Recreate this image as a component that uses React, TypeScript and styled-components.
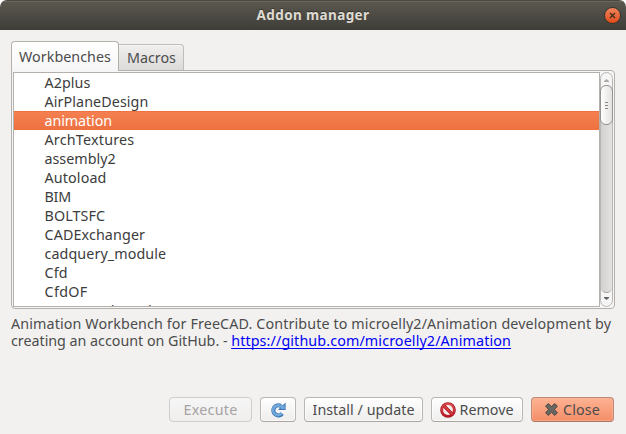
import React from 'react';
import styled, { createGlobalStyle } from 'styled-components';

const GlobalStyle = createGlobalStyle`
  * { box-sizing: border-box; }
  body { margin: 0; background: #fff; }
`;

const Window = styled.div`
  width: 626px;
  height: 434px;
  display: flex;
  flex-direction: column;
  overflow: hidden;
  border-radius: 7px 7px 0 0;
  background: #f2f1f0;
  color: #4c4c4c;
  font-family: 'Noto Sans', 'Open Sans', sans-serif;
  font-size: 14.3px;
  white-space: nowrap;
`;

const TitleBar = styled.header`
  flex: none;
  height: 30px;
  display: grid;
  grid-template-columns: 30px 1fr 30px;
  align-items: center;
  background: linear-gradient(#5b584f, #3e3d38);
  border-top: 1px solid #4b4943;
  box-shadow: inset 0 1px #69665d;
`;

const Title = styled.h1`
  grid-column: 2;
  margin: 0;
  text-align: center;
  font-size: 13.5px;
  line-height: 29px;
  font-weight: 700;
  letter-spacing: 0.38px;
  color: #dfdbd2;
  text-shadow: 0 -1px #33322e;
`;

const WindowClose = styled.button`
  width: 17px;
  height: 17px;
  margin: 0 0 0 7.5px;
  padding: 0;
  display: flex;
  border: 1px solid #35342f;
  border-radius: 50%;
  background: linear-gradient(#f4845d, #df4b1b);
`;

const Content = styled.main`
  display: flex;
  flex-direction: column;
  padding: 11px 11px 0;
`;

const TabBar = styled.div`
  display: flex;
  align-items: flex-end;
  height: 30px;
  z-index: 1;
  margin-bottom: -1px;
`;

const Tab = styled.button<{ $active?: boolean }>`
  width: ${p => (p.$active ? 108 : 65)}px;
  height: ${p => (p.$active ? 30 : 26)}px;
  margin: ${p => (p.$active ? '0' : '0 0 1px')};
  padding: ${p => (p.$active ? '0 0 0 7px' : '0 0 0 8px')};
  text-align: left;
  border: 1px solid ${p => (p.$active ? '#b4b1ac' : '#c0bdb9')};
  border-bottom: 0;
  border-left-width: ${p => (p.$active ? 1 : 0)}px;
  border-radius: ${p => (p.$active ? '4px 4px 0 0' : '0 4px 0 0')};
  background: ${p => (p.$active ? 'linear-gradient(#fff, #f7f6f6)' : 'linear-gradient(#f0efee, #dddbd9)')};
  box-shadow: ${p => (p.$active ? 'none' : 'inset 0 1px #f8f7f7')};
  color: inherit;
  font: inherit;
  line-height: ${p => (p.$active ? 29 : 25)}px;
  letter-spacing: ${p => (p.$active ? 0.045 : 0)}px;
`;

const Pane = styled.section`
  width: 604px;
  height: 239px;
  padding: 1px;
  border: 1px solid #b4b1ac;
  border-radius: 0 4px 4px 4px;
  background: #f7f6f6;
`;

const ListFrame = styled.div`
  display: flex;
  height: 235px;
`;

const List = styled.ul`
  width: 587px;
  height: 235px;
  margin: 0;
  padding: 0;
  list-style: none;
  overflow: hidden;
  border: 1px solid #b4b1ac;
  background: #fff;
  color: #3c3c3c;
`;

const Item = styled.li<{ $selected?: boolean; $spacing: number }>`
  height: 19px;
  line-height: 19px;
  padding-left: 30.5px;
  letter-spacing: ${p => p.$spacing}px;
  color: ${p => (p.$selected ? '#fff' : 'inherit')};
  background: ${p => (p.$selected ? 'linear-gradient(#f58051, #ee7140)' : 'none')};
  box-shadow: ${p => (p.$selected ? 'inset 0 1px #ef7240' : 'none')};
`;

const ScrollBar = styled.div`
  width: 13px;
  height: 235px;
  display: flex;
  flex-direction: column;
  border: 1px solid #b9b6b2;
  border-radius: 7px;
  background: #f6f5f5;
`;

const Stepper = styled.div<{ $down?: boolean }>`
  flex: none;
  height: ${p => (p.$down ? 13 : 12)}px;
  display: flex;
  justify-content: center;
  padding-top: ${p => (p.$down ? 4 : 6)}px;
  color: ${p => (p.$down ? '#656565' : '#aaa')};
`;

const Track = styled.div`
  flex: 1;
  border-bottom: 1px solid #aaa7a3;
  border-radius: 6px;
  background: linear-gradient(90deg, #d3d1cf, #e3e2e0);
`;

const Thumb = styled.div`
  width: 13px;
  height: 40px;
  margin-left: -1px;
  display: flex;
  flex-direction: column;
  align-items: center;
  justify-content: center;
  gap: 2px;
  border: 1px solid #96938f;
  border-radius: 6px;
  background: linear-gradient(90deg, #fff, #e3e2e0);
`;

const Grip = styled.span`
  width: 3px;
  height: 1px;
  background: #8c8985;
`;

const Description = styled.p`
  height: 88px;
  margin: 0;
  padding-top: 6px;
  line-height: 17px;
`;

const Line = styled.span<{ $spacing?: number }>`
  letter-spacing: ${p => p.$spacing ?? 0.12}px;
`;

const Link = styled.a`
  color: #0000f5;
  letter-spacing: 0.12px;
  text-decoration: underline;
  text-decoration-thickness: 1px;
  text-underline-offset: 2px;
  text-decoration-skip-ink: none;
`;

const Actions = styled.footer`
  display: flex;
  justify-content: flex-end;
  gap: 8px;
  padding-right: 1px;
`;

const Button = styled.button<{ $width: number; $primary?: boolean; $spacing?: number; $gap?: number }>`
  width: ${p => p.$width}px;
  height: 25px;
  padding: 0;
  display: flex;
  align-items: center;
  justify-content: center;
  gap: ${p => p.$gap ?? 0}px;
  border: 1px solid ${p => (p.$primary ? '#bd8a77' : '#b9b6b2')};
  border-bottom-color: ${p => (p.$primary ? '#a87866' : '#a9a6a2')};
  border-radius: 4px;
  background: ${p => (p.$primary ? 'linear-gradient(#fdb293, #f48e68)' : 'linear-gradient(#fff, #eeedec)')};
  box-shadow: inset 0 0 0 1px ${p => (p.$primary ? '#ffb69a80' : '#ffffffb0')};
  color: #4c4c4c;
  font: inherit;
  line-height: 23px;
  letter-spacing: ${p => p.$spacing ?? 0}px;

  &:disabled {
    color: #a5a4a2;
    border-color: #d0cecc;
    background: linear-gradient(#f7f6f6, #efeeed);
    box-shadow: none;
  }
`;

const addons: { name: string; spacing: number }[] = [
  { name: 'A2plus', spacing: 0.08 },
  { name: 'AirPlaneDesign', spacing: 0.09 },
  { name: 'animation', spacing: -0.08 },
  { name: 'ArchTextures', spacing: 0.22 },
  { name: 'assembly2', spacing: 0 },
  { name: 'Autoload', spacing: 0.14 },
  { name: 'BIM', spacing: -0.2 },
  { name: 'BOLTSFC', spacing: 0.1 },
  { name: 'CADExchanger', spacing: 0.12 },
  { name: 'cadquery_module', spacing: 0.09 },
  { name: 'Cfd', spacing: 0.2 },
  { name: 'CfdOF', spacing: 0.34 },
  { name: 'CommandPanel', spacing: -0.02 },
];

const Arrow = ({ down }: { down?: boolean }) => (
  <svg width="5" height="3" viewBox="0 0 5 3" fill="currentColor">
    <path d={down ? 'M0 0h5v1L2.5 3 0 1z' : 'M0 3V2l2.5-2L5 2v1z'} />
  </svg>
);

const RefreshIcon = () => (
  <svg width="16" height="16" viewBox="0 0 16 16" fill="none">
    <path d="M12.2 11.6A5 5 0 1 1 10.8 4" stroke="#3f77b4" strokeWidth="4.2" />
    <path d="M15.6 0.6V8H8L10.2 5.6 9 3.4 13 3z" fill="#3f77b4" />
    <path d="M11.7 11.1A4.8 4.8 0 1 1 10.6 4.2L12.8 5" stroke="#72a9dc" strokeWidth="2.6" />
    <path d="M14.7 2.6V7.1H10.3z" fill="#72a9dc" />
  </svg>
);

const RemoveIcon = () => (
  <svg width="16" height="16" viewBox="0 0 16 16" fill="none">
    <defs>
      <linearGradient id="removeRed" x1="0" y1="0" x2="0" y2="1">
        <stop offset="0" stopColor="#e0504d" />
        <stop offset="1" stopColor="#ba1626" />
      </linearGradient>
    </defs>
    <circle cx="8" cy="8" r="7.8" fill="#a51725" />
    <circle cx="8" cy="8" r="7.1" fill="url(#removeRed)" />
    <circle cx="8" cy="8" r="4.9" fill="#f5eeee" />
    <path d="M4 4l8 8" stroke="#a51725" strokeWidth="3.4" />
    <path d="M3.6 3.6l8.8 8.8" stroke="#d13a3c" strokeWidth="2.2" />
  </svg>
);

const CrossIcon = () => (
  <svg width="13" height="13" viewBox="0 0 13 13" fill="none">
    <path
      d="M3.2.6 6.5 3.6 9.8.6 12.4 3.2 9.3 6.5 12.4 9.8 9.8 12.4 6.5 9.3 3.2 12.4.6 9.8 3.7 6.5.6 3.2z"
      fill="#696763"
      stroke="#464541"
      strokeLinejoin="round"
    />
  </svg>
);

export default function App() {
  return (
    <>
      <GlobalStyle />
      <Window>
        <TitleBar>
          <Title>Addon manager</Title>
          <WindowClose aria-label="Close window">
            <svg width="15" height="15" viewBox="0 0 15 15">
              <path d="M5 5l5 5M10 5l-5 5" stroke="#42301f" strokeWidth="1.4" />
            </svg>
          </WindowClose>
        </TitleBar>
        <Content>
          <TabBar>
            <Tab $active>Workbenches</Tab>
            <Tab>Macros</Tab>
          </TabBar>
          <Pane>
            <ListFrame>
              <List>
                {addons.map(a => (
                  <Item key={a.name} $selected={a.name === 'animation'} $spacing={a.spacing}>
                    {a.name}
                  </Item>
                ))}
              </List>
              <ScrollBar>
                <Stepper><Arrow /></Stepper>
                <Track>
                  <Thumb><Grip /><Grip /><Grip /></Thumb>
                </Track>
                <Stepper $down><Arrow down /></Stepper>
              </ScrollBar>
            </ListFrame>
          </Pane>
          <Description>
            <Line>Animation Workbench for FreeCAD. Contribute to microelly2/Animation development by</Line>
            <br />
            <Line $spacing={-0.02}>creating an account on GitHub. - </Line>
            <Link href="#">https://github.com/microelly2/Animation</Link>
          </Description>
          <Actions>
            <Button $width={83} $spacing={0.25} disabled>Execute</Button>
            <Button $width={36} aria-label="Refresh"><RefreshIcon /></Button>
            <Button $width={119} $spacing={0.03}>Install / update</Button>
            <Button $width={92} $gap={3}><RemoveIcon />Remove</Button>
            <Button $width={83} $primary $gap={5} $spacing={0.14}><CrossIcon />Close</Button>
          </Actions>
        </Content>
      </Window>
    </>
  );
}
